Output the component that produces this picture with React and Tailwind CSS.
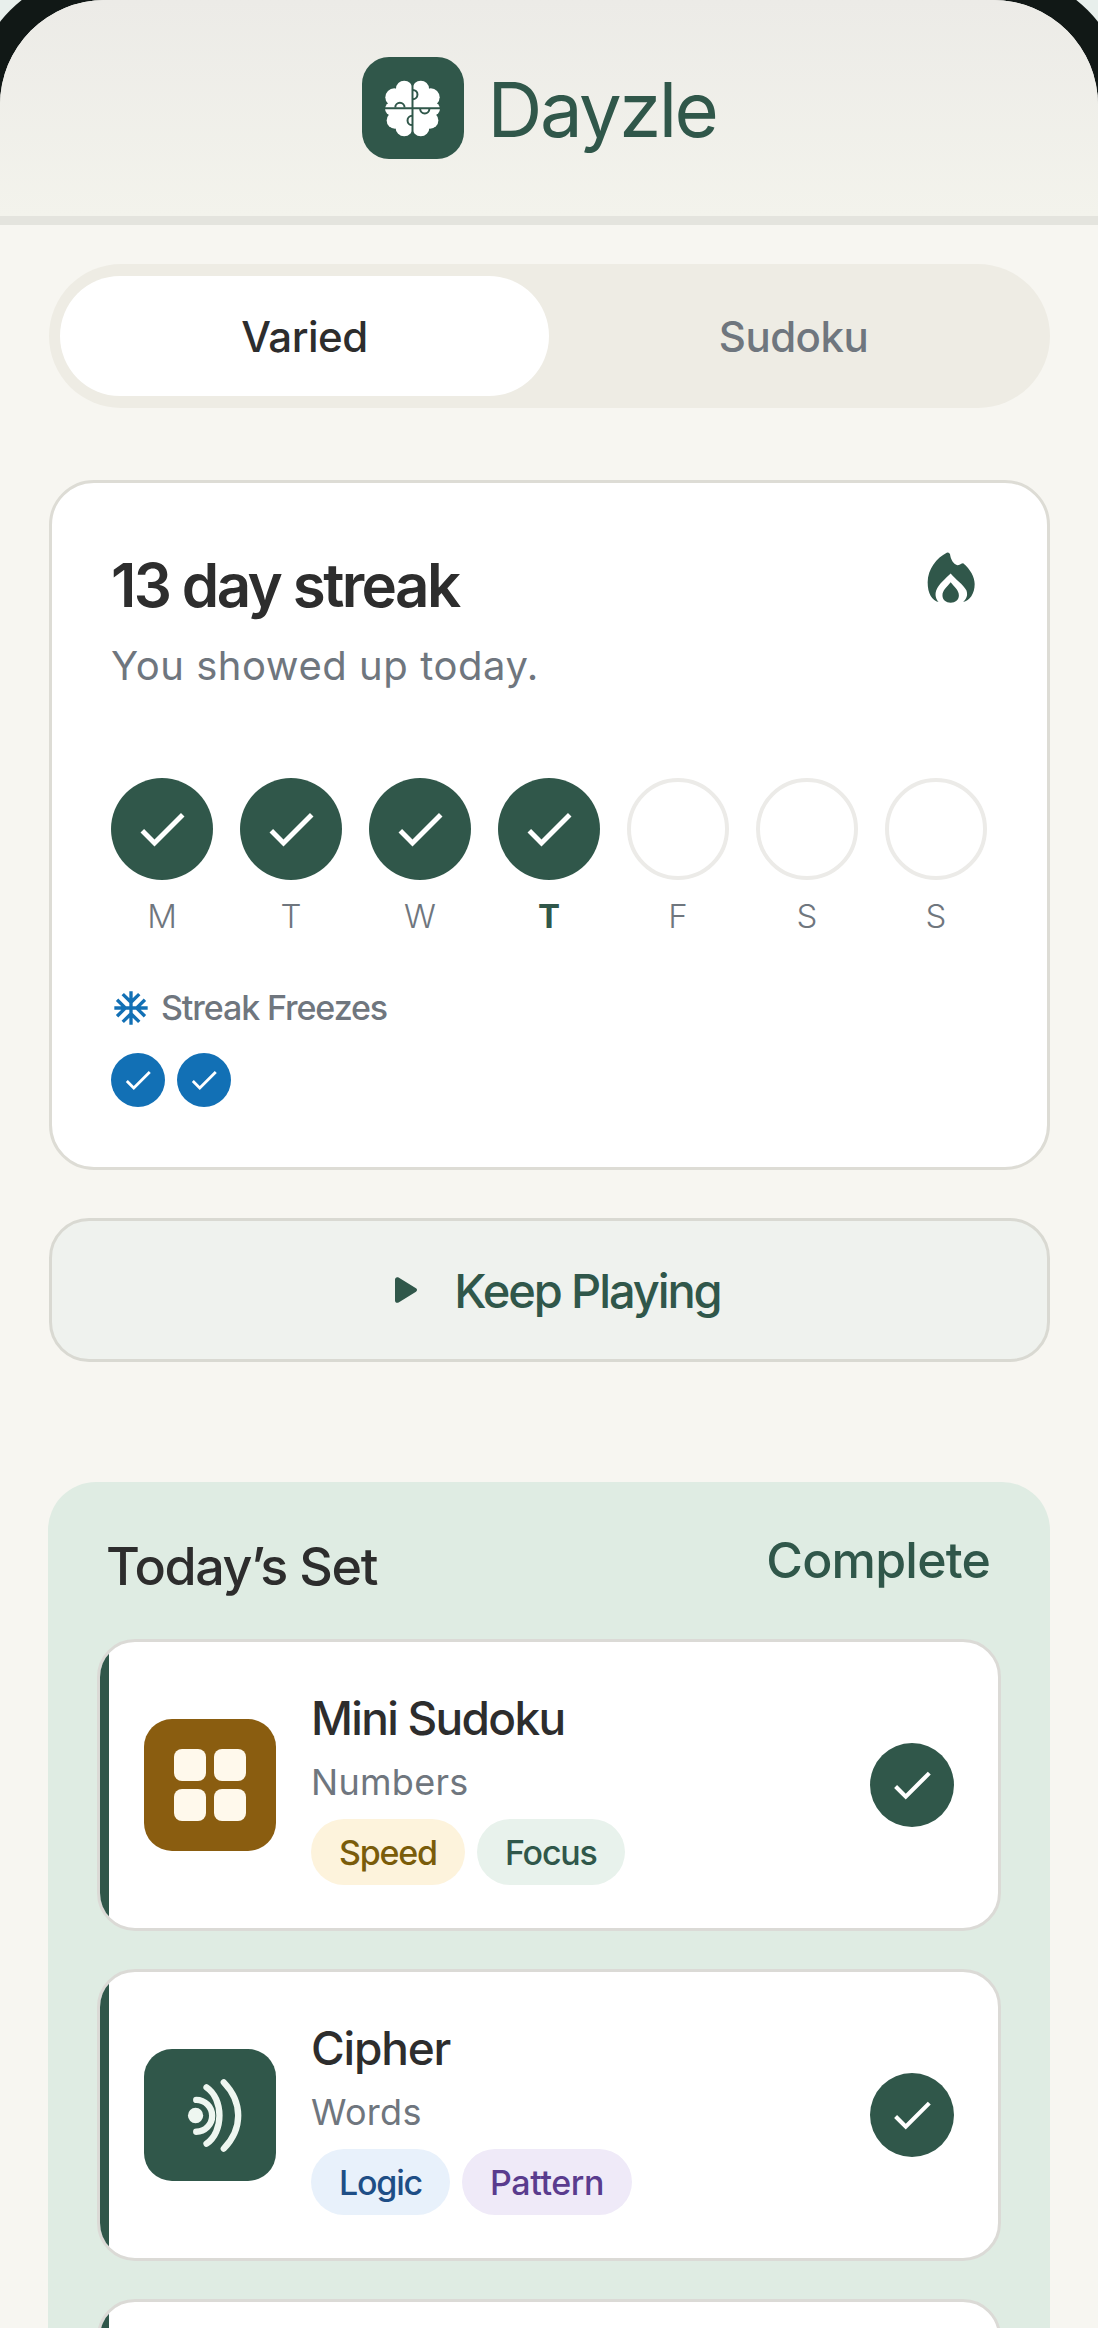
import { MdCheck, MdAcUnit } from "react-icons/md";

const green = "#30574a";

function BrainPuzzle() {
  return (
    <svg viewBox="130 118 170 172" className="w-[57px] h-[57px]">
      <g fill="#ffffff">
        <circle cx="190" cy="145" r="25" />
        <circle cx="160" cy="170" r="27" />
        <circle cx="152" cy="205" r="20" />
        <circle cx="162" cy="240" r="25" />
        <circle cx="190" cy="262" r="26" />
        <circle cx="240" cy="145" r="25" />
        <circle cx="270" cy="170" r="27" />
        <circle cx="278" cy="205" r="20" />
        <circle cx="268" cy="240" r="25" />
        <circle cx="240" cy="262" r="26" />
        <rect x="160" y="150" width="110" height="110" />
      </g>
      <g fill="none" stroke={green} strokeWidth="6">
        <path d="M128 203H302M215 116V292" />
        <path d="M163 201A14 14 0 1 1 191 201" />
        <path d="M216 148A14 14 0 1 1 216 176" />
        <path d="M238 205A14 14 0 0 0 266 205" />
        <path d="M214 226A14 14 0 1 0 214 254" />
      </g>
    </svg>
  );
}

function Flame() {
  return (
    <svg viewBox="80 60 146 164" className="w-[48px] h-[54px]" fill={green}>
      <path d="M140 65Q147 62 150 70C152 85 160 100 172 103C180 103 184 97 190 97C212 115 225 140 225 160C225 190 210 210 190 215C200 205 205 195 200 180C190 160 165 145 152 128C135 145 115 160 108 180C103 195 108 207 115 215C95 210 82 190 82 155C82 115 110 80 140 65Z" />
      <path d="M152 155C140 170 127 180 127 195C127 208 138 217 152 217C166 217 177 208 177 195C177 180 164 170 152 155Z" />
    </svg>
  );
}

function GridIcon() {
  return (
    <div className="grid grid-cols-2 gap-2">
      {[0, 1, 2, 3].map((i) => (
        <div key={i} className="w-8 h-8 rounded-lg bg-[#fff9ec]" />
      ))}
    </div>
  );
}

function WaveIcon() {
  return (
    <svg viewBox="130 140 220 230" className="w-[73px] h-[77px]" fill="none" stroke="#eef6f0" strokeWidth="19" strokeLinecap="round">
      <circle cx="195" cy="255" r="23" fill="#eef6f0" stroke="none" />
      <path d="M197 208A48 48 0 0 1 197 304" />
      <path d="M228 170C280 205 280 305 228 340" />
      <path d="M280 155C338 215 338 295 280 355" />
    </svg>
  );
}

const days = [
  { d: "M", done: true },
  { d: "T", done: true },
  { d: "W", done: true },
  { d: "T", done: true, today: true },
  { d: "F" },
  { d: "S" },
  { d: "S" },
];

function Chip({ label, className }) {
  return (
    <span className={`h-[66px] flex items-center px-[28px] rounded-full text-[34px] font-medium ${className}`}>
      {label}
    </span>
  );
}

function GameRow({ title, sub, icon, iconBg, chips, titleClass }) {
  return (
    <div className="h-[292px] bg-white rounded-[38px] border-[3px] border-[#dbdad6] overflow-hidden flex items-center pr-[44px]">
      <div className="self-stretch w-[9px] bg-[#30574a] shrink-0" />
      <div className={`ml-[35px] w-[132px] h-[132px] rounded-[28px] flex items-center justify-center shrink-0 ${iconBg}`}>{icon}</div>
      <div className="ml-[35px] flex-1 pt-[5px]">
        <div className={`text-[46px] leading-[56px] font-medium text-[#2d2d2d] ${titleClass}`}>{title}</div>
        <div className="mt-[14px] text-[36px] leading-[44px] text-[#6f767e] tracking-[0.3px]">{sub}</div>
        <div className="mt-[15px] flex gap-[12px]">{chips}</div>
      </div>
      <div className="w-[84px] h-[84px] rounded-full bg-[#30574a] flex items-center justify-center text-white shrink-0">
        <MdCheck size={50} />
      </div>
    </div>
  );
}

export default function App() {
  return (
    <div className="w-[1098px] h-[2328px] overflow-hidden bg-[#e8efec] [font-family:Inter,sans-serif]">
      <div className="h-[2328px] rounded-t-[105px] overflow-hidden shadow-[0_0_0_29px_#111816] bg-[#f7f6f1]">
        <header className="h-[225px] border-b-[9px] border-[#e4e4de] bg-gradient-to-b from-[#ecebe7] to-[#f3f3ec] flex items-center justify-center pr-[20px]">
          <div className="w-[102px] h-[102px] rounded-[27px] bg-[#30574a] flex items-center justify-center">
            <BrainPuzzle />
          </div>
          <span className="ml-[24px] mt-[2px] text-[76px] leading-none text-[#30574a] tracking-[-2.5px]">Dayzle</span>
        </header>

        <div className="pl-[49px] pr-[48px]">
          <div className="mt-[39px] h-[144px] rounded-full bg-[#eeece4] py-[12px] pl-[11px] pr-[12px] flex">
            <div className="w-[489px] rounded-full bg-white flex items-center justify-center text-[42px] font-medium text-[#2d2d2d] tracking-[-0.5px]">
              Varied
            </div>
            <div className="flex-1 flex items-center justify-center text-[42px] font-medium text-[#6f767e] tracking-[-0.5px]">
              Sudoku
            </div>
          </div>

          <section className="mt-[72px] h-[690px] bg-white rounded-[45px] border-[3px] border-[#dddcd5] pl-[59px] pr-[59px] pt-[66px]">
            <div className="flex justify-between items-start">
              <div>
                <h1 className="text-[60px] leading-[72px] font-semibold tracking-[-2.6px] text-[#2d2d2d]">13 day streak</h1>
                <p className="mt-[20px] text-[40px] leading-[50px] text-[#6f767e] tracking-[0.55px]">You showed up today.</p>
              </div>
              <div className="mr-[13px] mt-[2px]">
                <Flame />
              </div>
            </div>

            <div className="mt-[87px] flex gap-[27px]">
              {days.map((item, i) => (
                <div key={i} className="w-[102px] flex flex-col items-center">
                  {item.done ? (
                    <div className="w-[102px] h-[102px] rounded-full bg-[#30574a] flex items-center justify-center text-white">
                      <MdCheck size={60} />
                    </div>
                  ) : (
                    <div className="w-[102px] h-[102px] rounded-full border-[4px] border-[#ecebe8]" />
                  )}
                  <span className={`mt-[16px] text-[33px] leading-[40px] ${item.today ? "font-bold text-[#30574a]" : "font-light text-[#6f767e]"}`}>
                    {item.d}
                  </span>
                </div>
              ))}
            </div>

            <div className="mt-[50px] flex items-center text-[#1270b5]">
              <MdAcUnit size={40} />
              <span className="ml-[10px] text-[34px] leading-[44px] font-medium text-[#6f767e] tracking-[-1.1px]">Streak Freezes</span>
            </div>
            <div className="mt-[23px] flex gap-[12px]">
              {[0, 1].map((i) => (
                <div key={i} className="w-[54px] h-[54px] rounded-full bg-[#1270b5] flex items-center justify-center text-white">
                  <MdCheck size={34} />
                </div>
              ))}
            </div>
          </section>

          <button className="mt-[48px] w-full h-[144px] rounded-[40px] bg-[#eff2ee] border-[3px] border-[#d9d9d2] flex items-center justify-center text-[#30574a] pl-[16px]">
            <svg viewBox="0 0 24 28" className="w-[24px] h-[28px]" fill={green}>
              <path d="M1 3.5C1 1.5 3 .5 4.600 1.600L22 12.300C23.400 13.200 23.400 14.800 22 15.700L4.600 26.400C3 27.500 1 26.500 1 24.500Z" />
            </svg>
            <span className="ml-[36px] text-[47px] leading-none font-medium tracking-[-2.1px]">Keep Playing</span>
          </button>
        </div>

        <section className="mt-[120px] mx-[48px] rounded-[48px] bg-[#dfece3] px-[49px] pt-[50px] pb-[60px]">
          <div className="flex justify-between items-start pr-[11px]">
            <h2 className="text-[52px] leading-[62px] mt-[4px] font-medium tracking-[-1.4px] text-[#2d2d2d] ml-[9px]">Today’s Set</h2>
            <span className="text-[50px] leading-[56px] font-medium tracking-[-0.8px] text-[#30574a]">Complete</span>
          </div>
          <div className="mt-[41px] flex flex-col gap-[38px]">
            <GameRow
              title="Mini Sudoku"
              titleClass="tracking-[-1.7px]"
              sub="Numbers"
              icon={<GridIcon />}
              iconBg="bg-[#8a5d10]"
              chips={
                <>
                  <Chip label="Speed" className="bg-[#fdf3dc] text-[#7a5c0a] tracking-[-1.2px]" />
                  <Chip label="Focus" className="bg-[#e8f2ec] text-[#30574a] tracking-[-1.2px]" />
                </>
              }
            />
            <GameRow
              title="Cipher"
              titleClass="tracking-[-1.2px]"
              sub="Words"
              icon={<WaveIcon />}
              iconBg="bg-[#30574a]"
              chips={
                <>
                  <Chip label="Logic" className="bg-[#e8f1fb] text-[#1e4e86] tracking-[-1.2px]" />
                  <Chip label="Pattern" className="bg-[#efeaf8] text-[#5a3c8e] tracking-[-0.4px]" />
                </>
              }
            />
            <div className="h-[292px] bg-white rounded-[38px] border-[3px] border-[#dbdad6] overflow-hidden flex">
              <div className="self-stretch w-[9px] bg-[#30574a]" />
            </div>
          </div>
        </section>
      </div>
    </div>
  );
}
